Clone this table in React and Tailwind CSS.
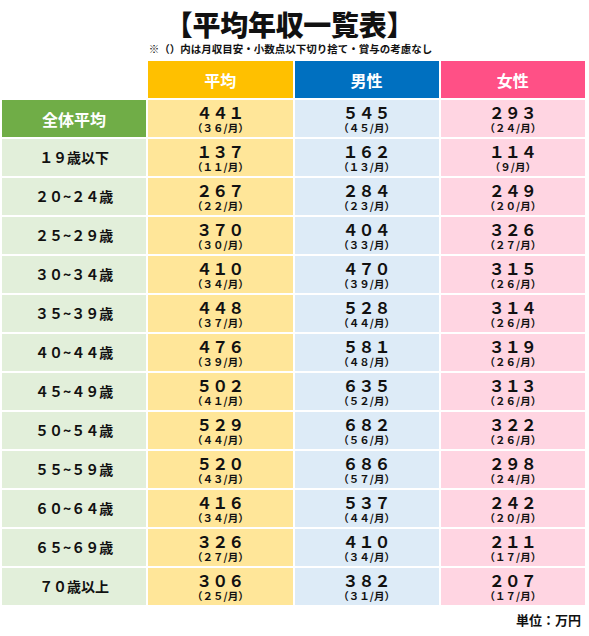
import React from "react";

const toWide = (s) => String(s).replace(/[0-9]/g, (d) => String.fromCharCode(d.charCodeAt(0) + 0xfee0));

const rows = [
  ["全体平均", 441, 36, 545, 45, 293, 24],
  ["19歳以下", 137, 11, 162, 13, 114, 9],
  ["20~24歳", 267, 22, 284, 23, 249, 20],
  ["25~29歳", 370, 30, 404, 33, 326, 27],
  ["30~34歳", 410, 34, 470, 39, 315, 26],
  ["35~39歳", 448, 37, 528, 44, 314, 26],
  ["40~44歳", 476, 39, 581, 48, 319, 26],
  ["45~49歳", 502, 41, 635, 52, 313, 26],
  ["50~54歳", 529, 44, 682, 56, 322, 26],
  ["55~59歳", 520, 43, 686, 57, 298, 24],
  ["60~64歳", 416, 34, 537, 44, 242, 20],
  ["65~69歳", 326, 27, 410, 34, 211, 17],
  ["70歳以上", 306, 25, 382, 31, 207, 17],
];

const bodyBg = ["bg-[#ffe699]", "bg-[#ddebf7]", "bg-[#ffd5e2]"];

function ValueCell({ value, month, bg }) {
  return (
    <div className={`${bg} h-[37px] flex flex-col items-center justify-center text-[#111]`}>
      <div className="text-[16px] leading-[18px] font-bold">{toWide(value)}</div>
      <div className="text-[10.5px] leading-[14px] font-bold">（{toWide(month)}/月）</div>
    </div>
  );
}

export default function App() {
  return (
    <div
      className="w-[589px] h-[636px] bg-white overflow-hidden"
      style={{ fontFamily: '"Noto Sans CJK JP", "Noto Sans", sans-serif' }}
    >
      {/* Title */}
      <div className="pt-[7px] flex flex-col items-center pr-[10px]">
        <h1 className="text-[28px] leading-[34px] font-black text-[#111] tracking-[-0.3px]">【平均年収一覧表】</h1>
        <p className="text-[10.5px] leading-[15px] font-bold text-[#111] pl-[2px]">
          ※（）内は月収目安・小数点以下切り捨て・賞与の考慮なし
        </p>
      </div>

      {/* Table */}
      <div className="ml-[2px] mt-[5px] w-[583px] grid grid-cols-4 gap-[2px]">
        <div className="h-[37px]" />
        <div className="h-[37px] bg-[#ffc000] flex items-center justify-center text-white text-[16px] font-bold">平均</div>
        <div className="h-[37px] bg-[#0070c0] flex items-center justify-center text-white text-[16px] font-bold">男性</div>
        <div className="h-[37px] bg-[#ff5086] flex items-center justify-center text-white text-[16px] font-bold">女性</div>

        {rows.map((r, i) => (
          <React.Fragment key={r[0]}>
            {i === 0 ? (
              <div className="h-[37px] bg-[#70ad47] flex items-center justify-center text-white text-[16px] font-bold">
                {r[0]}
              </div>
            ) : (
              <div className="h-[37px] bg-[#e2efda] flex items-center justify-center text-[#111] text-[14px] font-bold">
                {toWide(r[0])}
              </div>
            )}
            <ValueCell value={r[1]} month={r[2]} bg={bodyBg[0]} />
            <ValueCell value={r[3]} month={r[4]} bg={bodyBg[1]} />
            <ValueCell value={r[5]} month={r[6]} bg={bodyBg[2]} />
          </React.Fragment>
        ))}
      </div>

      {/* Unit */}
      <div className="mt-[6px] pr-[8px] text-right text-[13px] leading-[17px] font-bold text-[#111]">単位：万円</div>
    </div>
  );
}
